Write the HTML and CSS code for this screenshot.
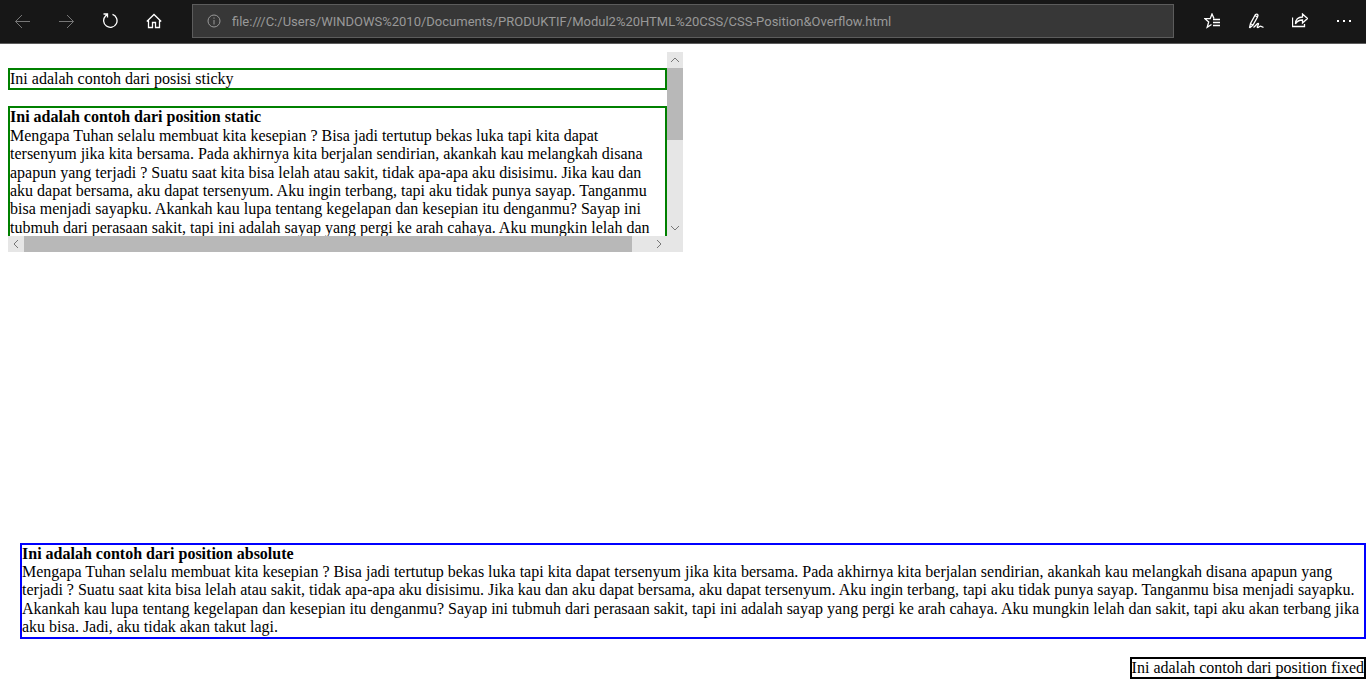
FILE: index.html
```html
<!DOCTYPE html>
<html lang="id">
<head>
<meta charset="utf-8">
<title>CSS Position &amp; Overflow</title>
<link rel="stylesheet" href="styles.css">
</head>
<body>
<header class="toolbar">
  <nav class="tools" aria-label="Navigasi">
    <button class="tool tool-dim" aria-label="Kembali"><svg viewBox="0 0 16 16"><path d="M16 8.500H1.500M8 2L1.500 8.500L8 15"/></svg></button>
    <button class="tool tool-dim" aria-label="Maju"><svg viewBox="0 0 16 16"><path d="M1 8.500H15.500M9 2L15.500 8.500L9 15"/></svg></button>
    <button class="tool" aria-label="Muat ulang"><svg class="strong" viewBox="0 0 16 16"><path d="M10.500 1.300A6.700 6.700 0 1 1 3.500 3L5 1.500M1.500 1H5.500V4.500"/></svg></button>
    <button class="tool" aria-label="Beranda"><svg class="strong" viewBox="0 0 16 16"><path d="M.8 8.500L8 1.500L15.200 8.500M2.500 7.500V14.500H6.500V9.500H9.500V14.500H13.500V7.500"/></svg></button>
  </nav>
  <label class="address">
    <svg class="info" viewBox="0 0 14 14"><circle cx="7" cy="7" r="6"/><path d="M7 6V10.500M7 3.500V4.700"/></svg>
    <input class="url" type="text" aria-label="Alamat" value="file:///C:/Users/WINDOWS%2010/Documents/PRODUKTIF/Modul2%20HTML%20CSS/CSS-Position&amp;Overflow.html">
  </label>
  <nav class="tools" aria-label="Alat">
    <button class="tool" aria-label="Favorit"><svg viewBox="0 0 16 16"><path class="strong" d="M10 5.500L8 1L6.200 5.700H1L4.700 9L3.200 14.200L7.500 11.500M9 6.500H16M9 9.500H16M9 12.500H16"/></svg></button>
    <button class="tool" aria-label="Catatan"><svg viewBox="0 0 16 16"><path class="strong" d="M1.500 15L2.500 10.500L7.500 1.500Q9 .5 10 2L9.500 4L5 12L1.500 15M3 11L5 12M7 2.500L9.500 4M5.500 14.500C8 12.500 10 9.500 10.500 10.500S8.500 14 9.500 14.500S12 12.500 13 13.200S14.500 14.500 15.500 14"/></svg></button>
    <button class="tool" aria-label="Bagikan"><svg viewBox="0 0 16 16"><path class="strong" d="M.5 4.500V13.500H12.500V11M3.500 11C3.500 6.500 6 4 10.500 4V1L15.500 5.500L10.500 10V7C7 7 5 8 3.500 11Z"/></svg></button>
    <button class="tool" aria-label="Lainnya"><svg viewBox="0 0 16 16"><path class="dots" d="M1 7H3V9H1ZM7 7H9V9H7ZM13 7H15V9H13Z"/></svg></button>
  </nav>
</header>
<main class="page">
  <section class="scroller">
    <div class="viewport">
      <p class="box green">Ini adalah contoh dari posisi sticky</p>
      <p class="box green"><b>Ini adalah contoh dari position static</b><br>Mengapa Tuhan selalu membuat kita kesepian ? Bisa jadi tertutup bekas luka tapi kita dapat tersenyum jika kita bersama. Pada akhirnya kita berjalan sendirian, akankah kau melangkah disana apapun yang terjadi ? Suatu saat kita bisa lelah atau sakit, tidak apa-apa aku disisimu. Jika kau dan aku dapat bersama, aku dapat tersenyum. Aku ingin terbang, tapi aku tidak punya sayap. Tanganmu bisa menjadi sayapku. Akankah kau lupa tentang kegelapan dan kesepian itu denganmu? Sayap ini tubmuh dari perasaan sakit, tapi ini adalah sayap yang pergi ke arah cahaya. Aku mungkin lelah dan</p>
    </div>
    <div class="bar bar-y">
      <svg class="arrow" viewBox="0 0 16 16"><path d="M4 10L8 6L12 10"/></svg>
      <div class="track"><div class="thumb"></div></div>
      <svg class="arrow" viewBox="0 0 16 16"><path d="M4 6L8 10L12 6"/></svg>
    </div>
    <div class="bar bar-x">
      <svg class="arrow" viewBox="0 0 16 16"><path d="M10 4L6 8L10 12"/></svg>
      <div class="track"><div class="thumb"></div></div>
      <svg class="arrow" viewBox="0 0 16 16"><path d="M6 4L10 8L6 12"/></svg>
    </div>
    <div class="corner"></div>
  </section>
  <p class="box blue"><b>Ini adalah contoh dari position absolute</b><br>Mengapa Tuhan selalu membuat kita kesepian ? Bisa jadi tertutup bekas luka tapi kita dapat tersenyum jika kita bersama. Pada akhirnya kita berjalan sendirian, akankah kau melangkah disana apapun yang terjadi ? Suatu saat kita bisa lelah atau sakit, tidak apa-apa aku disisimu. Jika kau dan aku dapat bersama, aku dapat tersenyum. Aku ingin terbang, tapi aku tidak punya sayap. Tanganmu bisa menjadi sayapku. Akankah kau lupa tentang kegelapan dan kesepian itu denganmu? Sayap ini tubmuh dari perasaan sakit, tapi ini adalah sayap yang pergi ke arah cahaya. Aku mungkin lelah dan sakit, tapi aku akan terbang jika aku bisa. Jadi, aku tidak akan takut lagi.</p>
  <p class="box black">Ini adalah contoh dari position fixed</p>
</main>
</body>
</html>
```

FILE: styles.css
```css
* { box-sizing: border-box; }
body {
  margin: 0;
  min-height: 100vh;
  display: flex;
  flex-direction: column;
  background: #fff;
  color: #000;
  font: 16px/1.15 "Liberation Serif", "Times New Roman", serif;
}
.toolbar {
  display: flex;
  gap: 16px;
  padding: 4px 0 5px;
  background: #171717;
  border-bottom: 1px solid #5c5c5c;
}
.tools { display: flex; }
.tool {
  width: 44px;
  padding: 0;
  border: 0;
  background: none;
  color: #fff;
  display: flex;
  align-items: center;
  justify-content: center;
}
.tool-dim { color: #777; }
.tool svg { width: 16px; height: 16px; }
svg { display: block; fill: none; stroke: currentColor; stroke-width: 1; }
.strong { stroke-width: 1.3; }
.dots { fill: currentColor; stroke: none; }
.address {
  flex: 1;
  display: flex;
  align-items: center;
  gap: 11px;
  padding: 0 14px;
  height: 34px;
  background: #373737;
  border: 1px solid #5c5c5c;
  color: #999;
}
.info { width: 14px; height: 14px; flex: none; }
.url {
  flex: 1;
  min-width: 0;
  padding: 0;
  border: 0;
  background: none;
  color: inherit;
  outline: 0;
  font: 13px Roboto, "Open Sans", sans-serif;
}
.page {
  flex: 1;
  display: flex;
  flex-direction: column;
  padding: 8px 0 13px 8px;
}
.scroller {
  width: calc(50% - 4px);
  height: 200px;
  display: grid;
  grid-template: minmax(0, 1fr) 16px / minmax(0, 1fr) 16px;
}
.viewport { overflow: hidden; }
.box { margin: 16px 0; border: 2px solid; }
.box.green { border-color: #008000; }
.box.blue { border-color: #00f; margin: auto 0 18px 12px; }
.box.black { border-color: #000; margin: 0; align-self: flex-end; }
.bar { display: flex; background: #e6e6e6; color: #777; }
.bar-y { flex-direction: column; }
.bar-x { grid-row: 2; }
.arrow { width: 16px; height: 16px; flex: none; }
.track { flex: 1; }
.thumb { background: #b8b8b8; }
.bar-y .thumb { height: 72px; }
.bar-x .thumb { width: 97%; height: 16px; }
.corner { background: #e6e6e6; }
```
